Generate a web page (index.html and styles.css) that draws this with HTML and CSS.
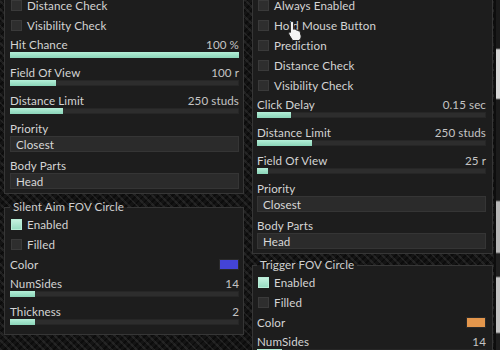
FILE: index.html
```
<html>
<head>
    <title>Aim Settings</title>
    <link rel="stylesheet" href="styles.css">
</head>
<body>
    <div class="screen">

        <div class="column column-left">
            <div class="panel">
                <div class="check"><span class="box"></span>Distance Check</div>
                <div class="check"><span class="box"></span>Visibility Check</div>

                <div class="slider">
                    <div class="slider-head"><span>Hit Chance</span><span class="value">100 %</span></div>
                    <div class="track"><div class="fill" style="width: 100%"></div></div>
                </div>
                <div class="slider">
                    <div class="slider-head"><span>Field Of View</span><span class="value">100 r</span></div>
                    <div class="track"><div class="fill" style="width: 20%"></div></div>
                </div>
                <div class="slider">
                    <div class="slider-head"><span>Distance Limit</span><span class="value">250 studs</span></div>
                    <div class="track"><div class="fill" style="width: 23%"></div></div>
                </div>

                <div class="select">
                    <div class="select-label">Priority</div>
                    <div class="select-box">Closest</div>
                </div>
                <div class="select">
                    <div class="select-label">Body Parts</div>
                    <div class="select-box">Head</div>
                </div>
            </div>

            <fieldset class="panel group group-left">
                <legend>Silent Aim FOV Circle</legend>
                <div class="check"><span class="box on"></span>Enabled</div>
                <div class="check"><span class="box"></span>Filled</div>
                <div class="color-row"><span>Color</span><span class="swatch swatch-blue"></span></div>
                <div class="slider">
                    <div class="slider-head"><span>NumSides</span><span class="value">14</span></div>
                    <div class="track"><div class="fill" style="width: 11%"></div></div>
                </div>
                <div class="slider">
                    <div class="slider-head"><span>Thickness</span><span class="value">2</span></div>
                    <div class="track"><div class="fill" style="width: 11%"></div></div>
                </div>
            </fieldset>
        </div>

        <div class="column column-right">
            <div class="panel panel-right">
                <div class="check"><span class="box"></span>Always Enabled</div>
                <div class="check"><span class="box"></span>Hold Mouse Button</div>
                <div class="check"><span class="box"></span>Prediction</div>
                <div class="check"><span class="box"></span>Distance Check</div>
                <div class="check"><span class="box"></span>Visibility Check</div>

                <div class="slider">
                    <div class="slider-head"><span>Click Delay</span><span class="value">0.15 sec</span></div>
                    <div class="track"><div class="fill" style="width: 15%"></div></div>
                </div>
                <div class="slider">
                    <div class="slider-head"><span>Distance Limit</span><span class="value">250 studs</span></div>
                    <div class="track"><div class="fill" style="width: 24%"></div></div>
                </div>
                <div class="slider">
                    <div class="slider-head"><span>Field Of View</span><span class="value">25 r</span></div>
                    <div class="track"><div class="fill" style="width: 5%"></div></div>
                </div>

                <div class="select">
                    <div class="select-label">Priority</div>
                    <div class="select-box">Closest</div>
                </div>
                <div class="select">
                    <div class="select-label">Body Parts</div>
                    <div class="select-box">Head</div>
                </div>
            </div>

            <fieldset class="panel panel-right group group-right">
                <legend>Trigger FOV Circle</legend>
                <div class="check"><span class="box on"></span>Enabled</div>
                <div class="check"><span class="box"></span>Filled</div>
                <div class="color-row"><span>Color</span><span class="swatch swatch-orange"></span></div>
                <div class="slider">
                    <div class="slider-head"><span>NumSides</span><span class="value">14</span></div>
                    <div class="track"><div class="fill" style="width: 11%"></div></div>
                </div>
            </fieldset>
        </div>

        <div class="edge"></div>
    </div>

    <!-- mouse pointer over "Hold Mouse Button" -->
    <svg class="cursor" width="16" height="22" viewBox="0 0 16 22">
        <path d="M5 1.5c1 0 1.6.7 1.6 1.6v6.2l.3-.1c.9-.3 1.8.1 2.1.9.8-.4 1.8 0 2.1.8.9-.3 1.9.2 2.1 1.1l.8 3.600c.3 1.5-.1 3-1.1 4.1L12 20.5H5.6L2.2 15c-.5-.8-.6-1.700-.2-2.4.5-.7 1.3-.8 2-.3l-.6-.4V3.1C3.4 2.2 4 1.5 5 1.5z" fill="#f4f4f4" stroke="#222" stroke-width="1"/>
    </svg>
</body>
</html>
```

FILE: styles.css
```
body {
    margin: 0;
    overflow: hidden;
    background-color: #141414;
    background-image:
        repeating-linear-gradient(45deg, rgba(255, 255, 255, 0.07) 0 2px, transparent 2px 6px),
        repeating-linear-gradient(-45deg, rgba(0, 0, 0, 0.4) 0 2px, transparent 2px 5px);
    font-family: Lato, "Open Sans", sans-serif;
    font-size: 11.6px;
    letter-spacing: 0.1px;
    color: #d4d4d4;
}

.screen {
    display: grid;
    grid-template-columns: 240px 241px 1fr;
    column-gap: 8px;
    padding-left: 4px;
    height: 350px;
}

.column {
    margin-top: -5px;
}

.panel {
    background: #1d1d1d;
    border: 1px solid #363636;
    border-top: none;
    padding: 0 4px 0 5px;
}

.panel-right {
    padding: 0 6px 0 4px;
}

.group {
    margin: 0;
    min-width: 0;
    border-top: 1px solid #363636;
    padding-bottom: 4px;
}

.group-left {
    margin-top: 6px;
}

.group-right {
    margin-top: 4px;
}

legend {
    padding: 0 3px;
    line-height: 14px;
    color: #cfcfcf;
}

.check {
    display: flex;
    align-items: center;
    height: 20px;
}

.box {
    width: 9px;
    height: 9px;
    margin: 0 5px 0 1px;
    background: #2e2e2e;
    border: 1px solid #3a3a3a;
}

.box.on {
    background: linear-gradient(#c4f2df, #98dcc2);
    border-color: #b8eed8;
}

.slider {
    padding: 3px 0 5px;
}

.slider-head {
    display: flex;
    justify-content: space-between;
    line-height: 14px;
}

.value {
    color: #c4c4c4;
}

.track {
    height: 6px;
    background: #2d2d2d;
    box-shadow: inset 0 0 0 1px #262626;
}

.fill {
    height: 100%;
    background: linear-gradient(#b4efd8, #8ad4b8);
}

.select {
    padding: 3px 0 4px;
}

.select-label {
    line-height: 14px;
}

.select-box {
    height: 16px;
    line-height: 16px;
    padding-left: 5px;
    background: #2b2b2b;
    border: 1px solid #353535;
    box-sizing: border-box;
    color: #d8d8d8;
}

.color-row {
    display: flex;
    justify-content: space-between;
    align-items: center;
    height: 20px;
}

.swatch {
    width: 20px;
    height: 11px;
    box-sizing: border-box;
    border: 1px solid #2a2a2a;
}

.swatch-blue {
    background: #4444d6;
}

.swatch-orange {
    background: #e3964c;
}

.edge {
    margin-left: -7px;
    border-left: 2px solid #0d0d0d;
    background: linear-gradient(#1a1a1a 0 48px, #d8d8d8 50px 98px, #1b1b1b 100px 200px, #b8b8b8 202px 252px, #202020 254px 276px, #c4c4c4 278px 332px, #1e1e1e 334px);
}

.cursor {
    position: absolute;
    left: 287px;
    top: 20px;
}
```
